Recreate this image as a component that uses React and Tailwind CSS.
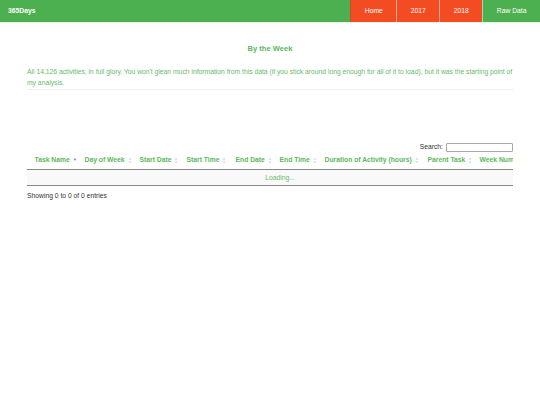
import React from "react";

const font = { fontFamily: '"Liberation Sans", Arial, Helvetica, sans-serif' };

function SortBoth() {
  return (
    <svg width="4" height="7" viewBox="0 0 4 7" className="ml-[3px] inline-block align-middle">
      <path d="M2 0.5 L3.6 2.8 L0.4 2.8 Z" fill="#dcdcdc" />
      <path d="M2 6.5 L3.6 4.2 L0.4 4.2 Z" fill="#dcdcdc" />
    </svg>
  );
}

function SortAsc() {
  return (
    <svg width="4" height="7" viewBox="0 0 4 7" className="ml-[3px] inline-block align-middle">
      <path d="M2 0.8 L3.6 3.2 L0.4 3.2 Z" fill="#9a9ab8" />
    </svg>
  );
}

const cols = [
  { name: "Task Name", w: 50, asc: true },
  { name: "Day of Week", w: 55 },
  { name: "Start Date", w: 47 },
  { name: "Start Time", w: 49 },
  { name: "End Date", w: 44 },
  { name: "End Time", w: 45 },
  { name: "Duration of Activity (hours)", w: 103 },
  { name: "Parent Task", w: 52 },
  { name: "Week Number", w: 61 },
];

export default function App() {
  return (
    <div className="min-h-[405px] w-[540px] bg-white text-[6.75px]" style={font}>
      <nav className="flex h-[23px] items-stretch bg-[#4caf50] border-b border-[#e8f5e9]">
        <div className="flex flex-1 items-center pl-[8px] font-bold text-white">365Days</div>
        <div className="flex items-stretch text-white">
          <div className="flex items-center border-l border-[#c8502f] bg-[#f44c22] px-[13.5px]">Home</div>
          <div className="flex items-center border-l border-[#f7a58f] bg-[#f44c22] px-[13.5px]">2017</div>
          <div className="flex items-center border-l border-[#f7a58f] bg-[#f44c22] px-[13.5px]">2018</div>
          <div className="flex items-center border-l border-[#a9d7aa] bg-[#4caf50] px-[13.5px]">Raw Data</div>
        </div>
      </nav>

      <div className="px-[27px]">
        <h1 className="mt-[20px] text-center text-[7.6px] font-bold leading-[12px] text-[#5cb85c]">By the Week</h1>
        <p className="mt-[11px] border-b border-[#eeeeee] pb-[1px] leading-[11px] text-[#66bb6a]">
          All 14,126 activities, in full glory. You won't glean much information from this data (if you stick around long enough for all of it to load), but it was the starting point of my analysis.
        </p>

        <div className="mt-[52px] flex h-[10px] items-center justify-end gap-[3px] text-[#333]">
          <span>Search:</span>
          <input className="h-[9px] w-[67px] rounded-[1px] border border-[#aaa] bg-white outline-none" />
        </div>

        <div className="w-[486px] overflow-hidden">
          <table className="w-[506px] table-fixed border-collapse">
            <colgroup>
              {cols.map((c) => (
                <col key={c.name} style={{ width: c.w }} />
              ))}
            </colgroup>
            <thead>
              <tr className="border-b border-[#888]">
                {cols.map((c) => (
                  <th
                    key={c.name}
                    className="whitespace-nowrap pt-[3px] pb-[5px] pl-[7.6px] pr-0 text-left font-bold leading-[9px] text-[#5cb85c]"
                  >
                    {c.name}
                    {c.asc ? <SortAsc /> : <SortBoth />}
                  </th>
                ))}
              </tr>
            </thead>
            <tbody>
              <tr className="border-b border-[#888] bg-[#f9f9f9]">
                <td colSpan={9} className="py-[3.5px] text-center leading-[8px] text-[#66bb6a]">
                  Loading...
                </td>
              </tr>
            </tbody>
          </table>
        </div>

        <div className="mt-[5px] leading-[9px] text-[#333]">Showing 0 to 0 of 0 entries</div>
      </div>
    </div>
  );
}
